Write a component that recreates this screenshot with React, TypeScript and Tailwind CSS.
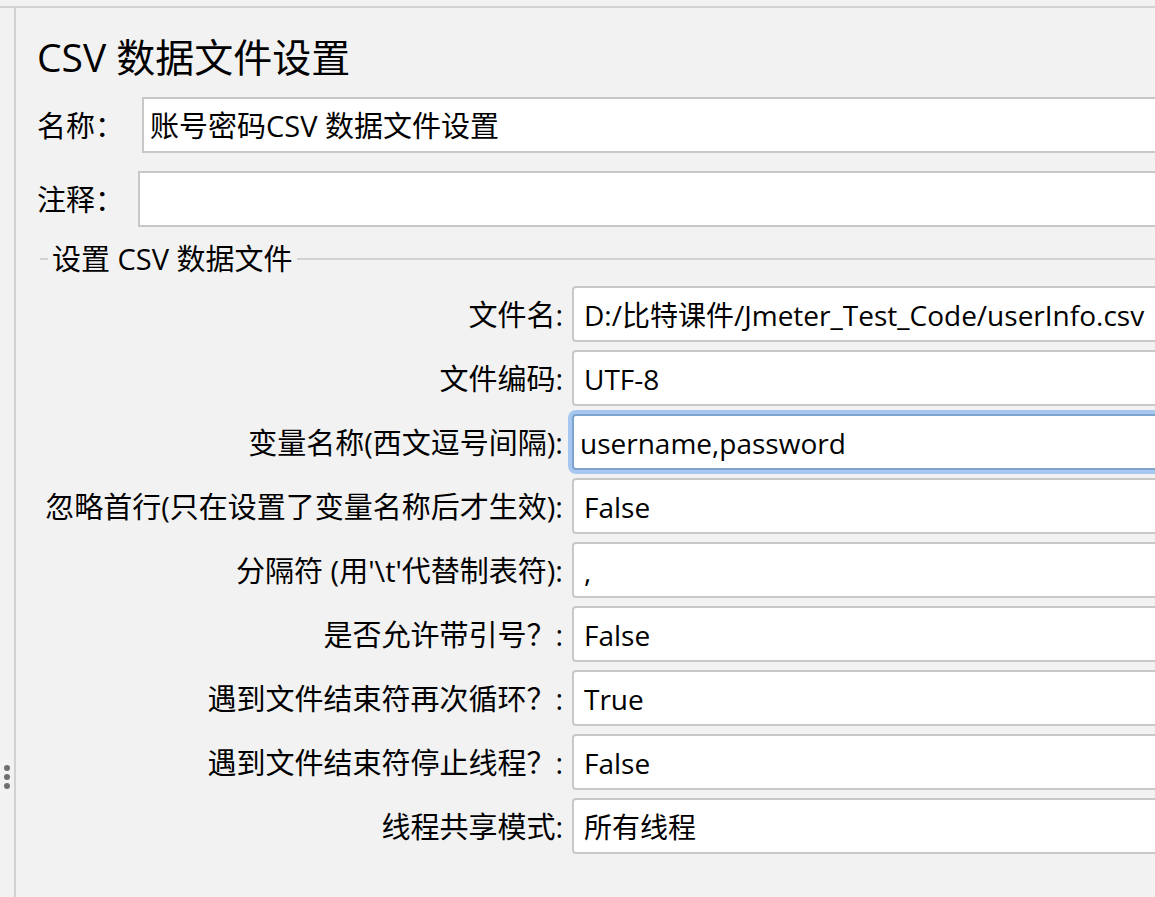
const font = {
  fontFamily: '"Open Sans", "Noto Sans CJK SC", sans-serif',
};

type Row = {
  label: string;
  value: string;
  focused?: boolean;
};

const rows: Row[] = [
  { label: "文件名:", value: "D:/比特课件/Jmeter_Test_Code/userInfo.csv" },
  { label: "文件编码:", value: "UTF-8" },
  { label: "变量名称(西文逗号间隔):", value: "username,password", focused: true },
  { label: "忽略首行(只在设置了变量名称后才生效):", value: "False" },
  { label: "分隔符 (用'\\t'代替制表符):", value: "," },
  { label: "是否允许带引号？:", value: "False" },
  { label: "遇到文件结束符再次循环？:", value: "True" },
  { label: "遇到文件结束符停止线程？:", value: "False" },
  { label: "线程共享模式:", value: "所有线程" },
];

function FieldRow({ label, value, focused }: Row) {
  return (
    <div className="flex h-[64px] items-start">
      <div className="flex h-[56px] w-[547px] shrink-0 items-center justify-end whitespace-nowrap pt-[2px] pr-[9px] text-[29px] text-black">
        {label}
      </div>
      <div
        className={`flex h-[56px] w-[700px] shrink-0 items-center rounded-[4px] border-2 bg-white pt-[2px] text-[28px] text-black ${
          focused
            ? "border-[#7ea3cd] pl-[6px] shadow-[0_0_0_4px_#a6c8f0]"
            : "border-[#c8c8c8] pl-[10px]"
        }`}
      >
        {value}
      </div>
    </div>
  );
}

export default function App() {
  return (
    <div
      className="flex h-[897px] w-[1155px] flex-col overflow-hidden bg-[#f2f2f2]"
      style={font}
    >
      <div className="h-[6px] shrink-0" />
      <div className="flex flex-1 border-t-2 border-[#d2d2d2]">
        <div className="flex w-[14px] shrink-0 flex-col items-center pt-[757px]">
          <div className="flex flex-col gap-[3px]">
            <span className="h-[6px] w-[6px] rounded-full bg-[#6f6f6f]" />
            <span className="h-[6px] w-[6px] rounded-full bg-[#6f6f6f]" />
            <span className="h-[6px] w-[6px] rounded-full bg-[#6f6f6f]" />
          </div>
        </div>
        <div className="flex-1 border-l-2 border-[#d2d2d2]">
          <h1 className="mt-[26px] pl-[21px] text-[39px] leading-[46px] font-normal text-black">
            CSV 数据文件设置
          </h1>

          <div className="mt-[17px] flex items-center pl-[21px]">
            <span className="w-[105px] shrink-0 pt-[2px] text-[29px] text-black">名称：</span>
            <div className="flex h-[56px] w-[1100px] shrink-0 items-center border-2 border-[#c8c8c8] bg-white pt-[2px] pl-[6px] text-[29px] text-black">
              账号密码CSV 数据文件设置
            </div>
          </div>

          <div className="mt-[18px] flex items-center pl-[21px]">
            <span className="w-[101px] shrink-0 pt-[2px] text-[29px] text-black">注释：</span>
            <div className="h-[56px] w-[1100px] shrink-0 border-2 border-[#c8c8c8] bg-white" />
          </div>

          <div className="mt-[13px] flex items-center pl-[24px]">
            <span className="h-[2px] w-[8px] bg-[#d2d2d2]" />
            <span className="px-[4px] pt-[1px] text-[29px] leading-[36px] text-black">设置 CSV 数据文件</span>
            <span className="h-[2px] flex-1 bg-[#d2d2d2]" />
          </div>

          <div className="mt-[9px] pl-[9px]">
            {rows.map((r) => (
              <FieldRow key={r.label} {...r} />
            ))}
          </div>
        </div>
      </div>
    </div>
  );
}
